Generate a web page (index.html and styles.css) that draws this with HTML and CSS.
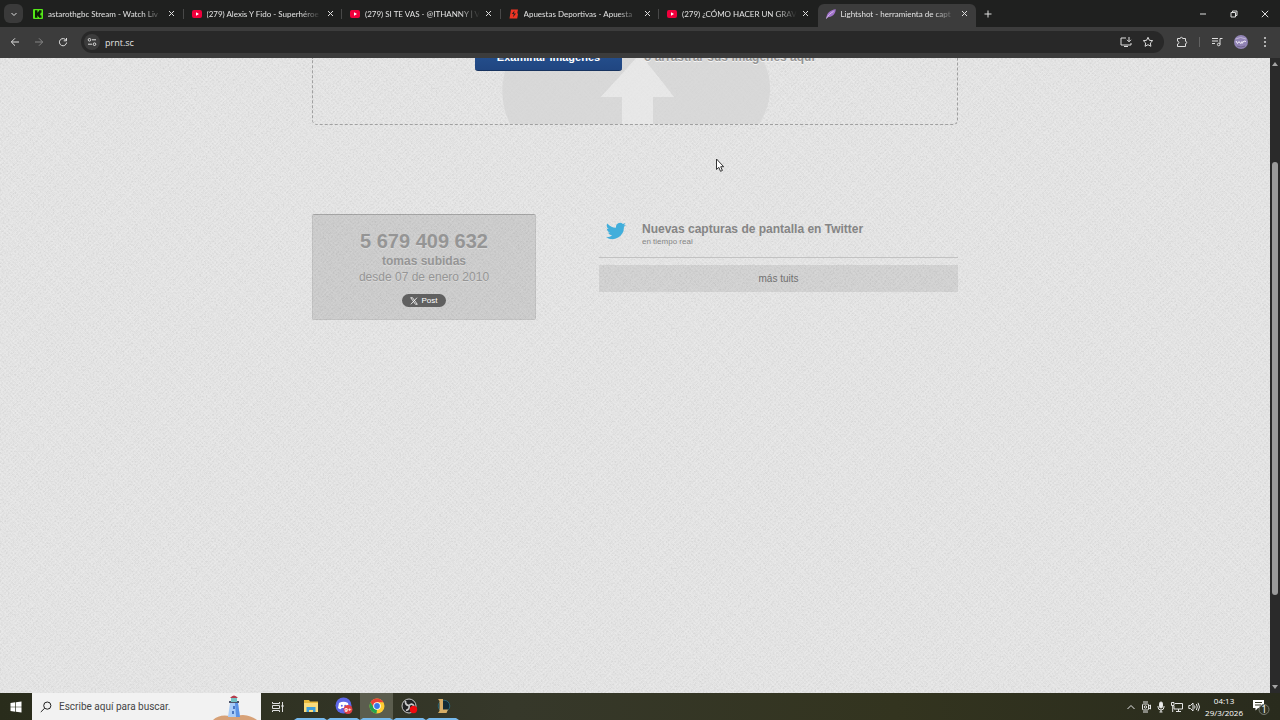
FILE: index.html
```html
<!DOCTYPE html>
<html lang="es">
<head>
  <meta charset="UTF-8">
  <meta name="viewport" content="width=device-width, initial-scale=1.0">
  <title>Lightshot - herramienta de captura de pantalla</title>
  <link rel="stylesheet" href="styles.css">
</head>
<body>
  <header class="tab-strip">
    <button class="tab-search" aria-label="Buscar pestañas">
      <svg width="8" height="8" viewBox="0 0 8 8"><path d="M1.500 3 4 5.500 6.500 3" /></svg>
    </button>
    <nav class="tabs">
      <div class="tab">
        <svg class="favicon" viewBox="0 0 10 10"><rect width="10" height="10" rx="1" fill="#54e818"/><path d="M2 1.200h2.400v2.300H5v-1h1V1.200h2.500v2.600h-1V5H7v.400h.5v1h1v2.400H6v-1H5v-1h-.6v2H2z" fill="#0c1d06"/></svg>
        <a href="#" class="tab-title">astarothgbc Stream - Watch Liv</a>
        <button class="tab-close" aria-label="Cerrar"><svg width="7" height="7" viewBox="0 0 7 7"><path d="M1 1l5 5M6 1L1 6"/></svg></button>
      </div>
      <div class="tab">
        <svg class="favicon" viewBox="0 0 10 10"><rect y="1" width="10" height="8" rx="2" fill="#f0003c"/><path d="M4 3.200v3.600L7 5z" fill="#fff"/></svg>
        <a href="#" class="tab-title">(279) Alexis Y Fido - Superhéroe</a>
        <button class="tab-close" aria-label="Cerrar"><svg width="7" height="7" viewBox="0 0 7 7"><path d="M1 1l5 5M6 1L1 6"/></svg></button>
      </div>
      <div class="tab">
        <svg class="favicon" viewBox="0 0 10 10"><rect y="1" width="10" height="8" rx="2" fill="#f0003c"/><path d="M4 3.200v3.600L7 5z" fill="#fff"/></svg>
        <a href="#" class="tab-title">(279) SI TE VAS - @ITHANNY | V</a>
        <button class="tab-close" aria-label="Cerrar"><svg width="7" height="7" viewBox="0 0 7 7"><path d="M1 1l5 5M6 1L1 6"/></svg></button>
      </div>
      <div class="tab">
        <svg class="favicon" viewBox="0 0 10 10"><path d="M2 .500h7L8.300 4l.7 1-.8 4.500H.500z" fill="#ed3524"/><path d="M5.500 1.500 2.800 5h2L4 8.300 7 4.500H5z" fill="#25201f"/></svg>
        <a href="#" class="tab-title">Apuestas Deportivas - Apuesta</a>
        <button class="tab-close" aria-label="Cerrar"><svg width="7" height="7" viewBox="0 0 7 7"><path d="M1 1l5 5M6 1L1 6"/></svg></button>
      </div>
      <div class="tab">
        <svg class="favicon" viewBox="0 0 10 10"><rect y="1" width="10" height="8" rx="2" fill="#f0003c"/><path d="M4 3.200v3.600L7 5z" fill="#fff"/></svg>
        <a href="#" class="tab-title">(279) ¿CÓMO HACER UN GRAV</a>
        <button class="tab-close" aria-label="Cerrar"><svg width="7" height="7" viewBox="0 0 7 7"><path d="M1 1l5 5M6 1L1 6"/></svg></button>
      </div>
      <div class="tab active">
        <svg class="favicon" viewBox="0 0 10 10"><path d="M.3 9.500C.5 4 4.500 1 9.800.3 9.500 5 6.500 8 2 8.200z" fill="#a273cb"/><path d="M.3 9.700C2 6.500 4.500 4 7.500 2.500" fill="none" stroke="#ead8f7" stroke-width=".7"/></svg>
        <a href="#" class="tab-title">Lightshot - herramienta de capt</a>
        <button class="tab-close" aria-label="Cerrar"><svg width="7" height="7" viewBox="0 0 7 7"><path d="M1 1l5 5M6 1L1 6"/></svg></button>
      </div>
    </nav>
    <button class="new-tab" aria-label="Nueva pestaña"><svg width="8" height="8" viewBox="0 0 8 8"><path d="M4 .500v7M.500 4h7"/></svg></button>
    <div class="window-controls">
      <button aria-label="Minimizar"><svg width="8" height="8" viewBox="0 0 8 8"><path d="M1 4h6"/></svg></button>
      <button aria-label="Restaurar"><svg width="8" height="8" viewBox="0 0 8 8"><path d="M1 2.500h4.500V7H1zM2.500 2.500V1H7v4.500H5.500"/></svg></button>
      <button aria-label="Cerrar ventana"><svg width="8" height="8" viewBox="0 0 8 8"><path d="M.8.8l6.400 6.400M7.200.8L.8 7.200"/></svg></button>
    </div>
  </header>

  <div class="toolbar">
    <div class="nav-buttons">
      <button aria-label="Atrás"><svg width="10" height="10" viewBox="0 0 10 10"><path d="M9 5H1.500M5 1.300 1.300 5 5 8.700"/></svg></button>
      <button aria-label="Adelante" class="disabled"><svg width="10" height="10" viewBox="0 0 10 10"><path d="M1 5h7.500M5 1.300 8.700 5 5 8.700"/></svg></button>
      <button aria-label="Recargar"><svg width="10" height="10" viewBox="0 0 10 10"><path d="M8.200 3.500A3.600 3.600 0 1 0 8.600 5.500M8.500 1v2.800H5.700"/></svg></button>
    </div>
    <div class="omnibox">
      <button class="site-info" aria-label="Información del sitio"><svg width="10" height="10" viewBox="0 0 10 10"><circle cx="2.500" cy="2.800" r="1.300"/><path d="M5 2.800h4M1 7.200h4"/><circle cx="7.500" cy="7.200" r="1.300"/></svg></button>
      <input class="address" type="text" aria-label="Dirección" value="prnt.sc">
      <button aria-label="Instalar"><svg width="12" height="12" viewBox="0 0 12 12"><path d="M6 2H1v7h10V7M4 10.500h4M9 1v4.500M7 3.800l2 2 2-2"/></svg></button>
      <button aria-label="Favoritos"><svg width="12" height="12" viewBox="0 0 12 12"><path d="M6 1.300l1.400 3 3.300.4-2.400 2.300.6 3.300L6 8.700l-2.900 1.600.6-3.300L1.300 4.700l3.300-.4z"/></svg></button>
    </div>
    <div class="toolbar-actions">
      <button aria-label="Extensiones"><svg width="12" height="12" viewBox="0 0 12 12"><path d="M1.500 2.500h2.700a1.200 1.200 0 0 1 2.400 0h2.900v2.800a1.200 1.200 0 0 1 0 2.400v2.800h-8V8a1.400 1.400 0 0 0 0-2.800z"/></svg></button>
      <span class="divider"></span>
      <button aria-label="Multimedia"><svg width="12" height="12" viewBox="0 0 12 12"><path d="M1 2.500h6M1 5h6M1 7.500h3M9 8.500V2.500h2.500"/><circle cx="7.700" cy="8.500" r="1.300"/></svg></button>
      <button aria-label="Perfil"><svg width="14" height="14" viewBox="0 0 14 14"><circle cx="7" cy="7" r="7" fill="#9184b5" stroke="none"/><path d="M1.500 4q5-3 10.500 0" stroke="#c0b5d5"/><path d="M2 6l1.500 2.500L5 6.500l1.500 2L8 6.500v2l2-2.500 2 .5" stroke="#f2edf9"/><path d="M3 11q4 2 8 0" stroke="#71658d"/></svg></button>
      <button aria-label="Menú"><svg width="12" height="12" viewBox="0 0 12 12"><g fill="#d8d8d8" stroke="none"><circle cx="6" cy="2" r="1"/><circle cx="6" cy="6" r="1"/><circle cx="6" cy="10" r="1"/></g></svg></button>
    </div>
  </div>

  <div class="viewport">
    <main class="page">
      <div class="content">
        <section class="dropzone">
          <svg class="cloud" width="268" height="68" viewBox="0 0 268 68">
            <path d="M8 0Q-8 34 9 68H120V39H99L138-4 172 39H151V68H256Q278 34 260 0z" fill="#d5d5d5"/>
            <path d="M138-4 99 39h21v29h31V39h21z" fill="#e8e8e8"/>
          </svg>
          <button class="browse">Examinar imágenes</button>
          <span class="drag-text">o arrastrar sus imágenes aquí</span>
        </section>
        <div class="columns">
          <section class="stats">
            <strong class="stats-number">5 679 409 632</strong>
            <strong class="stats-label">tomas subidas</strong>
            <span class="stats-since">desde 07 de enero 2010</span>
            <a href="#" class="post"><svg width="8" height="8" viewBox="0 0 8 8"><path d="M.7.700h1.800l4.800 6.600H5.500zM7 .700.900 7.300" fill="none" stroke="#fff" stroke-width=".8"/></svg>Post</a>
          </section>
          <section class="tweets">
            <div class="tweets-header">
              <svg class="bird" width="20" height="18" viewBox="0 0 24 20"><path d="M24 2.400c-.9.400-1.800.700-2.800.800 1-.6 1.800-1.600 2.200-2.700-1 .6-2 1-3.100 1.200A4.900 4.900 0 0 0 12 6.100C7.700 5.900 4.100 3.900 1.700.900A4.900 4.900 0 0 0 3.200 7.500c-.8 0-1.600-.2-2.200-.6 0 2.300 1.600 4.400 3.900 4.900-.7.200-1.500.2-2.200.1.600 2 2.400 3.400 4.600 3.400A9.900 9.900 0 0 1 0 17.400 14 14 0 0 0 21.500 5c1-.7 1.800-1.600 2.500-2.600z" fill="#41aedb"/></svg>
              <div>
                <h2>Nuevas capturas de pantalla en Twitter</h2>
                <p>en tiempo real</p>
              </div>
            </div>
            <a href="#" class="more">más tuits</a>
          </section>
        </div>
      </div>
    </main>
    <div class="scrollbar">
      <svg width="6" height="4" viewBox="0 0 6 4"><path d="M3 0l3 4H0z"/></svg>
      <div class="track"><div class="thumb"></div></div>
      <svg width="6" height="4" viewBox="0 0 6 4"><path d="M3 4L0 0h6z"/></svg>
    </div>
    <svg class="cursor" width="10" height="15" viewBox="0 0 10 15"><path d="M1.500 1v10.500l2.300-2.200 1.700 4 1.900-.8L5.700 8.700h3z" fill="#fff" stroke="#333"/></svg>
  </div>

  <footer class="taskbar">
    <button class="start" aria-label="Inicio"><svg width="12" height="12" viewBox="0 0 12 12" fill="#fff"><path d="M.5 2 5.300 1.300v4.400H.5zM6 1.200 11.500.400v5.300H6zM.5 6.300h4.800v4.400L.5 10zM6 6.300h5.500v5.300L6 10.800z"/></svg></button>
    <label class="search">
      <svg width="12" height="12" viewBox="0 0 12 12"><circle cx="7.300" cy="4.600" r="3.600" fill="none" stroke="#222"/><path d="M4.700 7.200.8 11" stroke="#222"/></svg>
      <input type="text" aria-label="Buscar" placeholder="Escribe aquí para buscar.">
      <svg class="lighthouse" width="44" height="26" viewBox="0 0 44 26">
        <path d="M0 26Q6 20 17 22L30 21Q39 22 44 26z" fill="#d7a177"/>
        <path d="M17 9h8l2 14H15z" fill="#a9cdf9"/><path d="M22 9h3l2 14h-4z" fill="#5b92e5"/>
        <path d="M16 7h10v2H16z" fill="#4d5369"/><path d="M18 4h6v4h-6z" fill="#74c3c5"/><path d="M17 4q4-5 8 0z" fill="#b53a4b"/><path d="M20 12h2v3h-2zM19 17h2v3h-2z" fill="#4976c2"/>
      </svg>
    </label>
    <nav class="apps">
      <button aria-label="Vista de tareas"><svg width="12" height="12" viewBox="0 0 12 12" fill="none" stroke="#ddd"><path d="M.5 1v1.500h7V1M.5 4.500h7v3h-7zM.5 11V9.500h7V11M10.500 1v10"/><path d="M9.500 4h2v2h-2z" fill="#ddd" stroke="none"/></svg></button>
      <button aria-label="Explorador" class="open"><svg width="16" height="14" viewBox="0 0 16 14"><path d="M1 1h5l1 1.500h8V13H1z" fill="#e8b93d"/><path d="M1 4h14v9H1z" fill="#fbdc7c"/><path d="M3.500 13V8h9v5h-2.500v-2H6v2z" fill="#3f9fdb"/></svg></button>
      <button aria-label="Discord" class="open"><svg width="18" height="18" viewBox="0 0 18 18"><circle cx="8.500" cy="8.500" r="8" fill="#5d67e8"/><path d="M4 6q4.500-2.500 9 0l1 5q-1.500 1.500-3 1l-.7-1H6.700L6 12q-1.500.5-3-1z" fill="#fff"/><circle cx="6.800" cy="8.800" r="1" fill="#5d67e8"/><circle cx="10.200" cy="8.800" r="1" fill="#5d67e8"/><circle cx="13" cy="12.500" r="4.500" fill="#df4048"/><text x="13" y="15" text-anchor="middle" class="badge-text">9+</text></svg></button>
      <button aria-label="Chrome" class="open current"><svg width="16" height="16" viewBox="0 0 16 16"><circle cx="8" cy="8" r="7.500" fill="#ffcd32"/><path d="M8 8 4.800 9.800 1.500 4.200A7.500 7.500 0 0 1 14.500 4.300H8z" fill="#e94337"/><path d="M1.500 4.200 5 10l3 1.500L7.500 15.500A7.500 7.500 0 0 1 1.500 4.200z" fill="#24a34d"/><circle cx="8" cy="8" r="3.800" fill="#fff"/><circle cx="8" cy="8" r="2.900" fill="#3979e8"/></svg></button>
      <button aria-label="OBS Studio" class="open"><svg width="18" height="16" viewBox="0 0 18 16"><circle cx="8" cy="8" r="7" fill="#222325" stroke="#c7c7c7"/><path d="M8 7.500Q4 7 4.500 3M8 7.500q3-3 5 .5M8 7.500q1 4-3 5" fill="none" stroke="#ccc" stroke-width="1.700"/><circle cx="12.500" cy="11.500" r="3.700" fill="#f00a0e"/></svg></button>
      <button aria-label="League of Legends" class="open"><svg width="16" height="16" viewBox="0 0 16 16"><circle cx="9" cy="8" r="5.800" fill="#122b36" stroke="#276071"/><path d="M3 1h5v10.500h5L11.500 15H3l1.500-2V3z" fill="#d6ad66"/></svg></button>
    </nav>
    <div class="tray">
      <svg width="10" height="10" viewBox="0 0 10 10"><path d="M1.500 7 5 3.500 8.500 7"/></svg>
      <svg width="10" height="12" viewBox="0 0 10 12"><rect x="1.500" y="3" width="6" height="6" rx="1"/><circle cx="4.500" cy="6" r="1.200"/><path d="M8 5l1.500-1v4L8 7M2 1h5M2 11h5"/></svg>
      <svg width="10" height="12" viewBox="0 0 10 12"><rect x="3.500" y="1" width="3" height="6" rx="1.500" fill="#eee"/><path d="M2 5v1q0 3 3 3t3-3V5M5 9v2M3.500 11h3"/></svg>
      <svg width="12" height="12" viewBox="0 0 12 12"><path d="M4 2.500h7.500v5.500H3V5M5 10.500h5M7.500 8v2.500M.5 1.500h2.500v3H.5zM1.700 4.500V11"/></svg>
      <svg width="12" height="12" viewBox="0 0 12 12"><path d="M.8 4.500h1.700L5 2v8L2.500 7.500H.8zM6.500 4.500q1 1.500 0 3M8.300 3q2 3 0 6M10 1.800q3 4.200 0 8.400"/></svg>
      <time class="clock"><span>04:13</span><span>29/3/2026</span></time>
      <button class="notifications" aria-label="Notificaciones"><svg width="18" height="18" viewBox="0 0 18 18"><path d="M1 2h11v8H6l-2.500 2.500V10H1z" fill="#fff" stroke="none"/><path d="M3 4.500h7M3 7h6" stroke="#30331f"/><circle cx="12" cy="11.500" r="5" fill="#303223" stroke="#777a70"/><text x="12" y="15" text-anchor="middle" class="count-text">1</text></svg></button>
    </div>
  </footer>
</body>
</html>
```
FILE: styles.css
```css
* {
  box-sizing: border-box;
}

body {
  margin: 0;
  height: 100vh;
  display: flex;
  flex-direction: column;
  overflow: hidden;
  font-family: "Segoe UI", "Open Sans", sans-serif;
  font-size: 8px;
  color: #e3e3e3;
}

button {
  display: flex;
  align-items: center;
  justify-content: center;
  padding: 0;
  border: none;
  background: none;
  color: inherit;
  font: inherit;
}

a {
  color: inherit;
  text-decoration: none;
}

svg {
  display: block;
  flex-shrink: 0;
}

input {
  min-width: 0;
  border: none;
  outline: none;
  background: none;
  padding: 0;
}

/* Tabs */
.tab-strip {
  display: flex;
  height: 27px;
  flex-shrink: 0;
  background: #1f201f;
}

.tab-strip button svg,
.toolbar svg {
  fill: none;
  stroke: #dedede;
}

.tab-search {
  width: 19px;
  height: 19px;
  margin: 4px 2px 0 4px;
  border-radius: 6px;
  background: #3a3a3a;
}

.tabs {
  display: flex;
  flex: 0 1 951px;
  min-width: 0;
}

.tab {
  display: flex;
  align-items: center;
  flex: 1;
  min-width: 0;
  gap: 5px;
  padding: 0 8px;
  position: relative;
}

.tab:not(.active):not(:nth-last-child(2))::after {
  content: "";
  position: absolute;
  right: 0;
  top: 9px;
  width: 1px;
  height: 10px;
  background: #484848;
}

.tab.active {
  margin-top: 4px;
  padding-bottom: 4px;
  border-radius: 6px 6px 0 0;
  background: #3c3c3c;
}

.favicon {
  width: 10px;
  height: 10px;
}

.tab-title {
  flex: 1;
  overflow: hidden;
  white-space: nowrap;
  font: 8px/12px "Segoe UI", Lato, sans-serif;
  mask-image: linear-gradient(to right, #000 82%, transparent);
}

.tab-close {
  width: 8px;
}

.new-tab {
  width: 24px;
}

.window-controls {
  display: flex;
  margin-left: auto;
}

.window-controls button {
  width: 31px;
}

/* Toolbar */
.toolbar {
  display: flex;
  align-items: center;
  height: 31px;
  padding-bottom: 1px;
  flex-shrink: 0;
  background: #3c3c3c;
}

.nav-buttons {
  display: flex;
  gap: 14px;
  padding: 0 13px 0 10px;
}

.disabled {
  opacity: 0.45;
}

.omnibox {
  display: flex;
  align-items: center;
  flex: 1;
  height: 22px;
  gap: 10px;
  padding: 0 10px 0 3px;
  border-radius: 11px;
  background: #282828;
}

.site-info {
  width: 16px;
  height: 16px;
  border-radius: 50%;
  background: #3c3c3c;
}

.address {
  flex: 1;
  margin-left: -5px;
  color: #e3e3e3;
  font: 9px "Segoe UI", "Open Sans", sans-serif;
}

.toolbar-actions {
  display: flex;
  align-items: center;
  gap: 11px;
  padding: 0 9px 0 12px;
}

.divider {
  width: 1px;
  height: 10px;
  background: #626262;
}

/* Page */
.viewport {
  display: flex;
  flex: 1;
  min-height: 0;
  position: relative;
}

.page {
  flex: 1;
  overflow: hidden;
  background-color: #e4e4e4;
  background-image:
    repeating-linear-gradient(45deg, rgba(255, 255, 255, 0.12) 0 1px, transparent 1px 3px),
    repeating-linear-gradient(-45deg, rgba(255, 255, 255, 0.12) 0 1px, transparent 1px 3px),
    url("data:image/svg+xml,%3Csvg xmlns='http://www.w3.org/2000/svg' width='240' height='240'%3E%3Cfilter id='n'%3E%3CfeTurbulence type='fractalNoise' baseFrequency='.6' numOctaves='2' stitchTiles='stitch'/%3E%3CfeColorMatrix values='0 0 0 0 0 0 0 0 0 0 0 0 0 0 0 .14 0 0 0 -.055'/%3E%3C/filter%3E%3Crect width='240' height='240' filter='url(%23n)'/%3E%3C/svg%3E");
  font-family: "Liberation Sans", Arial, sans-serif;
  color: #858585;
}

.content {
  max-width: 646px;
  margin: 0 auto;
}

.dropzone {
  display: flex;
  align-items: flex-start;
  height: 67px;
  padding-left: 162px;
  gap: 22px;
  overflow: hidden;
  position: relative;
  border: 1px dashed #a0a0a0;
  border-top: none;
  border-radius: 0 0 5px 5px;
}

.cloud {
  position: absolute;
  left: 189px;
  top: 0;
  opacity: 0.75;
}

.browse {
  position: relative;
  width: 147px;
  height: 34px;
  margin-top: -21px;
  padding-bottom: 2px;
  padding-top: 8px;
  border-bottom: 1px solid #17335f;
  border-radius: 3px;
  background: linear-gradient(#29589a, #204681);
  color: #fff;
  font-size: 11px;
  font-weight: bold;
}

.drag-text {
  position: relative;
  margin-top: -8px;
  font-size: 12px;
  font-weight: bold;
  line-height: 14px;
  color: #949494;
  text-shadow: 0 1px #f5f5f5;
}

.columns {
  display: flex;
  gap: 63px;
  margin-top: 89px;
}

.stats {
  display: flex;
  flex-direction: column;
  align-items: center;
  width: 224px;
  padding: 15px 0 12px;
  border: 1px solid rgba(0, 0, 0, 0.06);
  border-top-color: rgba(0, 0, 0, 0.2);
  border-radius: 2px;
  background: rgba(0, 0, 0, 0.1);
  color: #959595;
  text-shadow: 0 1px #d9d9d9;
}

.stats-number {
  font-size: 20px;
  line-height: 23px;
}

.stats-label {
  font-size: 12px;
  line-height: 16px;
}

.stats-since {
  font-size: 12px;
  line-height: 17px;
}

.post {
  display: flex;
  align-items: center;
  gap: 3px;
  height: 13px;
  margin-top: 8px;
  padding: 0 8px;
  border-radius: 7px;
  background: #606060;
  color: #fff;
  font-size: 8px;
  text-shadow: none;
}

.tweets {
  flex: 1;
}

.tweets-header {
  display: flex;
  gap: 16px;
  height: 44px;
  padding: 8px 7px 0;
  border-bottom: 1px solid #c2c2c2;
}

.tweets h2 {
  margin: 0;
  font-size: 12px;
  line-height: 14px;
}

.tweets p {
  margin: 0;
  font-size: 8px;
  line-height: 11px;
}

.more {
  display: block;
  margin-top: 7px;
  background: rgba(0, 0, 0, 0.08);
  font-size: 10px;
  line-height: 27px;
  text-align: center;
  color: #707070;
}

.scrollbar {
  display: flex;
  flex-direction: column;
  align-items: center;
  width: 10px;
  padding: 4px 0;
  gap: 4px;
  background: #2a2a2a;
}

.scrollbar svg {
  fill: #a5a5a5;
}

.track {
  display: flex;
  flex-direction: column;
  flex: 1;
}

.track::before {
  content: "";
  flex: 15;
}

.track::after {
  content: "";
  flex: 14;
}

.thumb {
  width: 6px;
  flex: 71;
  border-radius: 3px;
  background: #9b9b9b;
}

.cursor {
  position: absolute;
  left: 715px;
  top: 100px;
}

/* Taskbar */
.taskbar {
  display: flex;
  height: 27px;
  flex-shrink: 0;
  background: linear-gradient(to right, #292c1b, #36382a 40%, #33341f 70%, #292b1d);
}

.start {
  width: 32px;
}

.search {
  display: flex;
  align-items: center;
  width: 229px;
  gap: 7px;
  padding: 0 4px 0 8px;
  background: #f2f2f2;
}

.search input {
  flex: 1;
  font: 10px "Segoe UI", Roboto, sans-serif;
}

.search input::placeholder {
  color: #454545;
  opacity: 1;
}

.lighthouse {
  align-self: flex-end;
}

.apps {
  display: flex;
}

.apps button {
  width: 33px;
}

.apps .open {
  border-bottom: 2px solid #76b9ed;
  border-left: 3px solid transparent;
  border-right: 3px solid transparent;
}

.apps .current {
  background: #5b5d4e;
}

.badge-text {
  font: bold 6px "Open Sans", sans-serif;
  fill: #fff;
}

.tray {
  display: flex;
  align-items: center;
  gap: 5px;
  margin-left: auto;
  padding-right: 10px;
}

.tray svg {
  fill: none;
  stroke: #e6e6e6;
}

.clock {
  display: flex;
  flex-direction: column;
  align-items: center;
  line-height: 12px;
  color: #fff;
}

.notifications {
  margin-left: 4px;
}

.tray .count-text {
  font: 10px "Open Sans", sans-serif;
  fill: #fff;
  stroke: none;
}
```
